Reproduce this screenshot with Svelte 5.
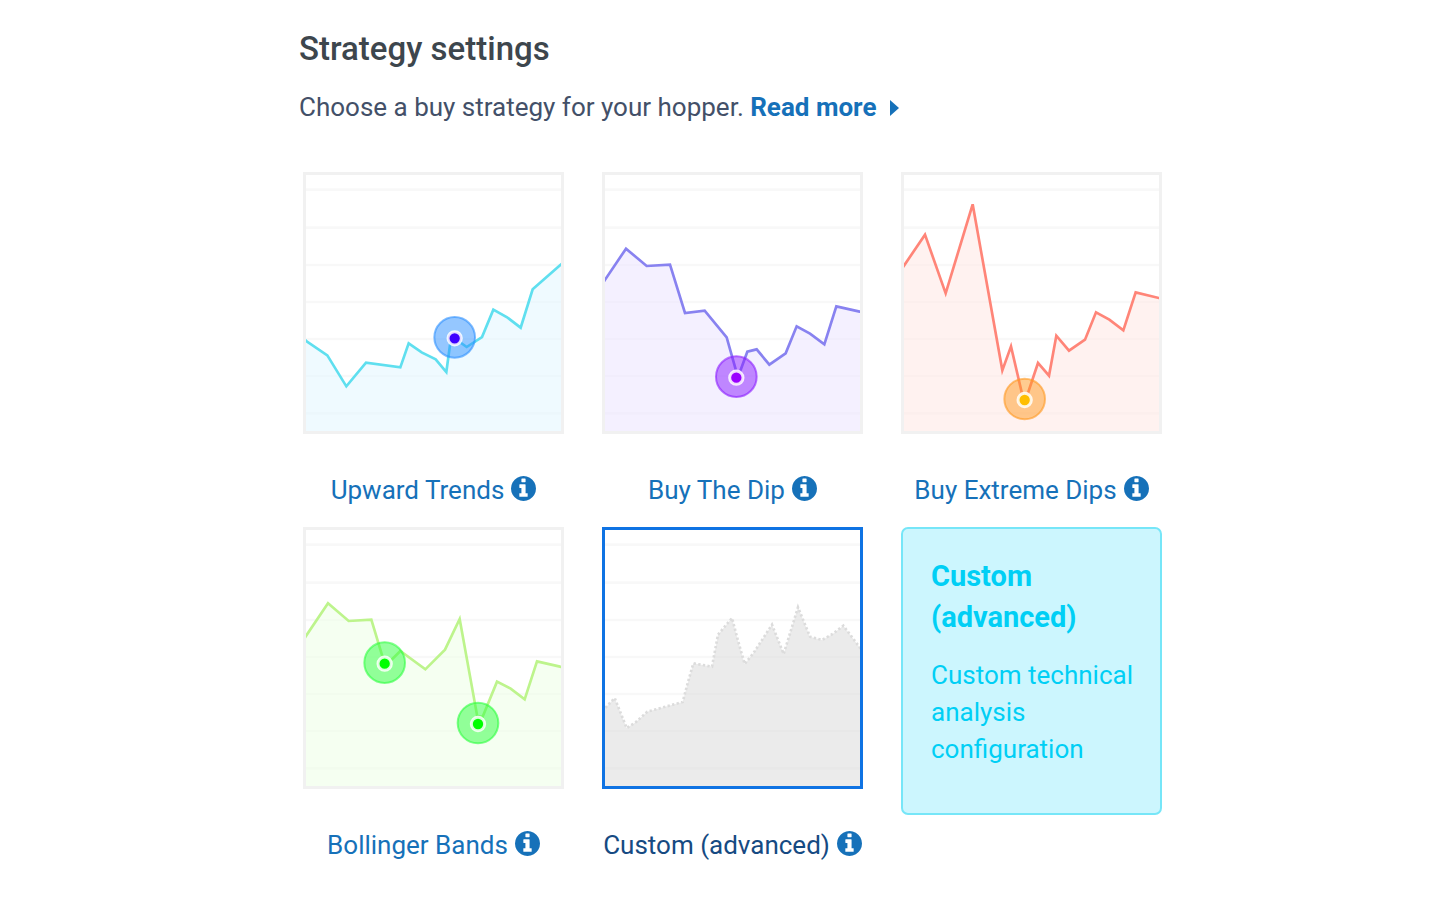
<script>
  const gridLines = [74, 188, 300, 411, 522, 633, 745];

  const strategies = [
    {
      id: 'upward',
      name: 'Upward Trends',
      left: 34,
      line: '#5fdfef',
      fill: '#e4f7ff',
      points: '30,523 36,529 98,571 155,664 214,593 317,607 342,535 381,562 423,583 455,621 466,540 480,520 516,546 562,516 596,434 636,456 678,488 714,373 796,301 806,293',
      markers: [{ x: 480, y: 517, color: '#2c8fff', dot: '#3d00ff' }]
    },
    {
      id: 'dip',
      name: 'Buy The Dip',
      left: 39,
      line: '#8882f0',
      fill: '#ede6ff',
      points: '32,356 38,346 102,251 164,303 234,299 279,444 338,437 404,517 433,620 444,620 466,560 494,553 532,599 581,565 614,484 654,506 697,538 733,424 803,440 812,442',
      markers: [{ x: 433, y: 635, color: '#8a1cff', dot: '#9a00ff' }]
    },
    {
      id: 'extreme',
      name: 'Buy Extreme Dips',
      left: 36,
      line: '#ff8578',
      fill: '#ffe9e6',
      points: '30,310 36,302 99,209 161,385 242,118 331,616 357,544 391,690 406,690 438,594 471,632 493,512 531,557 579,524 612,442 652,464 694,496 731,382 801,399 810,401',
      markers: [{ x: 398, y: 702, color: '#ff9a22', dot: '#ffbe00' }]
    },
    {
      id: 'bollinger',
      name: 'Bollinger Bands',
      left: 34,
      line: '#bdf48c',
      fill: '#eeffe8',
      points: '30,354 36,345 100,250 162,303 230,299 268,425 290,420 317,393 392,448 451,389 495,297 548,590 564,590 607,485 648,506 690,538 727,424 796,440 806,442',
      markers: [
        { x: 270, y: 428, color: '#2dff3f', dot: '#00ff00' },
        { x: 550, y: 609, color: '#2dff3f', dot: '#00ff00' }
      ]
    },
    {
      id: 'custom',
      name: 'Custom (advanced)',
      left: 39,
      line: '#dcdcdc',
      fill: '#dedede',
      dotted: true,
      points: '32,575 38,566 68,534 84,574 104,624 132,606 166,575 214,562 272,546 288,486 304,430 360,440 378,344 420,294 438,362 458,432 484,400 540,314 575,402 618,262 654,350 690,360 722,342 754,317 803,382 812,392',
      markers: []
    }
  ];

  let selected = $state('custom');
</script>

<div class="page">
  <main>
    <h1>Strategy settings</h1>
    <p class="intro">
      Choose a buy strategy for your hopper.
      <a href="#more">Read more<svg class="caret" viewBox="0 0 9 16" aria-hidden="true"><path d="M0 0L9 8L0 16z" /></svg></a>
    </p>

    <div class="grid">
      {#each strategies as s (s.id)}
        <div class="option" class:selected={selected === s.id}>
          <button
            class="chart"
            aria-labelledby={`name-${s.id}`}
            aria-pressed={selected === s.id}
            onclick={() => (selected = s.id)}
          >
            <svg viewBox={`${s.left} 30 765 768`} aria-hidden="true">
              {#each gridLines as y}
                <line x1="30" x2="812" y1={y} y2={y} class="rule" />
              {/each}
              <polygon points={`${s.points} 812,810 30,810`} fill={s.fill} fill-opacity="0.6" />
              <polyline
                points={s.points}
                fill="none"
                stroke={s.line}
                stroke-width="8"
                stroke-dasharray={s.dotted ? '7 7' : undefined}
              />
              {#each s.markers as m}
                <circle cx={m.x} cy={m.y} r="61" fill={m.color} fill-opacity="0.5" stroke={m.color} stroke-opacity="0.6" stroke-width="6" />
                <circle cx={m.x} cy={m.y + 3} r="20" fill={m.dot} stroke="#fff" stroke-opacity="0.85" stroke-width="9" />
              {/each}
            </svg>
          </button>
          <div class="caption">
            <a id={`name-${s.id}`} href={`#${s.id}`}>{s.name}</a>
            <button class="info" aria-label={`About ${s.name}`}>
              <svg viewBox="128 128 1536 1536" aria-hidden="true">
                <path d="M1152 1376v-160q0-14-9-23t-23-9h-96V672q0-14-9-23t-23-9H672q-14 0-23 9t-9 23v160q0 14 9 23t23 9h96v320h-96q-14 0-23 9t-9 23v160q0 14 9 23t23 9h448q14 0 23-9t9-23zm-128-896V320q0-14-9-23t-23-9H800q-14 0-23 9t-9 23v160q0 14 9 23t23 9h192q14 0 23-9t9-23zm640 416q0 209-103 385.500T1281.500 1561 896 1664t-385.500-103T231 1281.500 128 896t103-385.500T510.500 231 896 128t385.500 103T1561 510.500 1664 896z" />
              </svg>
            </button>
          </div>
        </div>
      {/each}

      <aside>
        <h2>Custom (advanced)</h2>
        <p>Custom technical analysis configuration</p>
      </aside>
    </div>
  </main>
</div>

<style>
  :global(body) {
    background: #fff;
  }
  .page {
    box-sizing: border-box;
    padding: 29px 0 16px 22px;
    font-family: Roboto, "Liberation Sans", sans-serif;
    font-size: 26px;
    color: #435068;
  }
  main {
    max-width: 864px;
    margin: 0 auto;
  }
  h1 {
    margin: 0;
    font-size: 33px;
    line-height: 40px;
    font-weight: 500;
    color: #3d464d;
  }
  .intro {
    margin: 20px 0 0;
    line-height: 37px;
  }
  a {
    color: #1671b9;
    text-decoration: none;
  }
  .intro a {
    font-weight: 700;
  }
  .caret {
    width: 9px;
    height: 16px;
    margin-left: 14px;
    fill: currentColor;
  }
  .grid {
    display: grid;
    grid-template-columns: repeat(3, 1fr);
    gap: 17px 38px;
    align-items: start;
    margin: 46px 1px 0 4px;
  }
  .option {
    min-width: 0;
  }
  .chart {
    display: block;
    box-sizing: border-box;
    width: 100%;
    padding: 0;
    border: 3px solid #f1f1f1;
    background: #fff;
    cursor: pointer;
  }
  .chart svg {
    display: block;
    width: 100%;
    height: auto;
  }
  .selected .chart {
    border-color: #0f73e3;
  }
  .rule {
    stroke: #000;
    stroke-opacity: 0.028;
    stroke-width: 8;
  }
  .caption {
    display: flex;
    justify-content: center;
    align-items: center;
    gap: 7px;
    margin-top: 36px;
    line-height: 40px;
    white-space: nowrap;
  }
  .selected .caption a {
    color: #164a82;
  }
  .info {
    padding: 0 0 4px;
    border: 0;
    background: none;
    color: #1671b9;
    cursor: pointer;
  }
  .info svg {
    display: block;
    width: 25px;
    height: 25px;
    fill: currentColor;
  }
  aside {
    box-sizing: border-box;
    padding: 27px 20px 45px 28px;
    border: 2px solid #76e6f8;
    border-radius: 7px;
    background: #ccf6fe;
    color: #00cff5;
  }
  h2 {
    margin: 0;
    font-size: 29px;
    line-height: 41px;
    font-weight: 700;
  }
  aside p {
    margin: 19px 0 0;
    line-height: 37px;
  }
</style>
